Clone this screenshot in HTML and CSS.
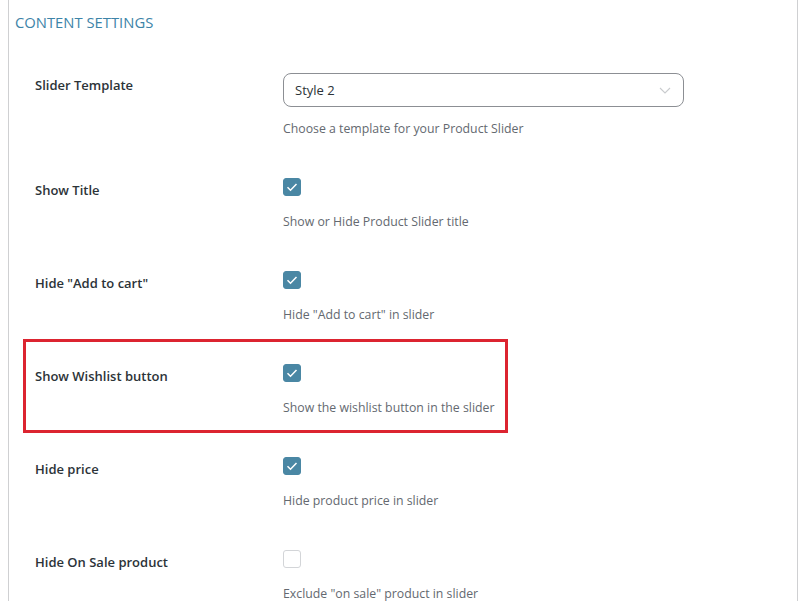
FILE: index.html
```html
<!DOCTYPE html>
<html>
<head>
<meta charset="utf-8">
<link rel="stylesheet" href="styles.css">
</head>
<body>
<div class="panel">
  <h2 class="title">CONTENT SETTINGS</h2>
  <div class="rows">
    <div class="row row-select">
      <div class="label">Slider Template</div>
      <div class="field">
        <div class="select">
          <span>Style 2</span>
          <svg class="chev" width="12" height="7" viewBox="0 0 12 7"><path d="M1 1l5 5 5-5" fill="none" stroke="#c9cbce" stroke-width="1.1"/></svg>
        </div>
        <div class="desc desc-select">Choose a template for your Product Slider</div>
      </div>
    </div>
    <div class="row">
      <div class="label">Show Title</div>
      <div class="field">
        <span class="cb on"><svg width="18" height="18" viewBox="0 0 18 18"><path d="M4.5 9.3l3 3 6-6.3" fill="none" stroke="#fff" stroke-width="1.5"/></svg></span>
        <div class="desc">Show or Hide Product Slider title</div>
      </div>
    </div>
    <div class="row">
      <div class="label">Hide "Add to cart"</div>
      <div class="field">
        <span class="cb on"><svg width="18" height="18" viewBox="0 0 18 18"><path d="M4.5 9.3l3 3 6-6.3" fill="none" stroke="#fff" stroke-width="1.5"/></svg></span>
        <div class="desc">Hide "Add to cart" in slider</div>
      </div>
    </div>
    <div class="row">
      <div class="label">Show Wishlist button</div>
      <div class="field">
        <span class="cb on"><svg width="18" height="18" viewBox="0 0 18 18"><path d="M4.5 9.3l3 3 6-6.3" fill="none" stroke="#fff" stroke-width="1.5"/></svg></span>
        <div class="desc">Show the wishlist button in the slider</div>
      </div>
      <div class="highlight"></div>
    </div>
    <div class="row">
      <div class="label">Hide price</div>
      <div class="field">
        <span class="cb on"><svg width="18" height="18" viewBox="0 0 18 18"><path d="M4.5 9.3l3 3 6-6.3" fill="none" stroke="#fff" stroke-width="1.5"/></svg></span>
        <div class="desc">Hide product price in slider</div>
      </div>
    </div>
    <div class="row">
      <div class="label">Hide On Sale product</div>
      <div class="field">
        <span class="cb"></span>
        <div class="desc">Exclude "on sale" product in slider</div>
      </div>
    </div>
  </div>
</div>
</body>
</html>
```
FILE: styles.css
```css
html, body {
  margin: 0;
  padding: 0;
  background: #fff;
  overflow: hidden;
}
body {
  font-family: "Open Sans", "Noto Sans", sans-serif;
  color: #1d2327;
}
.panel {
  margin-left: 8px;
  width: 782px;
  height: 601px;
  border-left: 1px solid #cfd0d2;
  border-right: 1px solid #cfd0d2;
  padding-left: 6px;
  box-sizing: content-box;
}
.title {
  margin: 0;
  padding-top: 12px;
  font-size: 14.8px;
  line-height: 20px;
  font-weight: 500;
  color: #3d84a8;
  letter-spacing: 0;
}
.rows {
  padding-left: 20px;
  padding-top: 21px;
}
.row {
  position: relative;
  display: grid;
  grid-template-columns: 248px 1fr;
  padding: 20px 0 20px;
}
.label {
  font-size: 13px;
  font-weight: 600;
  line-height: 20px;
  margin-top: 2px;
  color: #2c3338;
}
.field {
  display: flex;
  flex-direction: column;
  align-items: flex-start;
}
.select {
  width: 401px;
  height: 34px;
  box-sizing: border-box;
  border: 1px solid #8c8f94;
  border-radius: 8px;
  display: flex;
  align-items: center;
  justify-content: space-between;
  padding: 0 12px 0 11px;
  font-size: 13px;
  color: #2c3338;
}
.chev {
  margin-top: 1px;
}
.desc {
  font-size: 12.3px;
  line-height: 18px;
  color: #646970;
  margin-top: 17px;
}
.desc-select {
  margin-top: 13px;
}
.cb {
  display: block;
  width: 18px;
  height: 18px;
  box-sizing: border-box;
  border-radius: 3px;
  border: 1px solid #d3d5d8;
  background: #fff;
}
.cb.on {
  background: #4a87a4;
  border-color: #4a87a4;
}
.cb svg {
  display: block;
  margin: -1px;
}
.highlight {
  position: absolute;
  left: -12px;
  top: -5px;
  width: 485px;
  height: 94px;
  border: 3px solid #dc2430;
  box-sizing: border-box;
  pointer-events: none;
}
```
